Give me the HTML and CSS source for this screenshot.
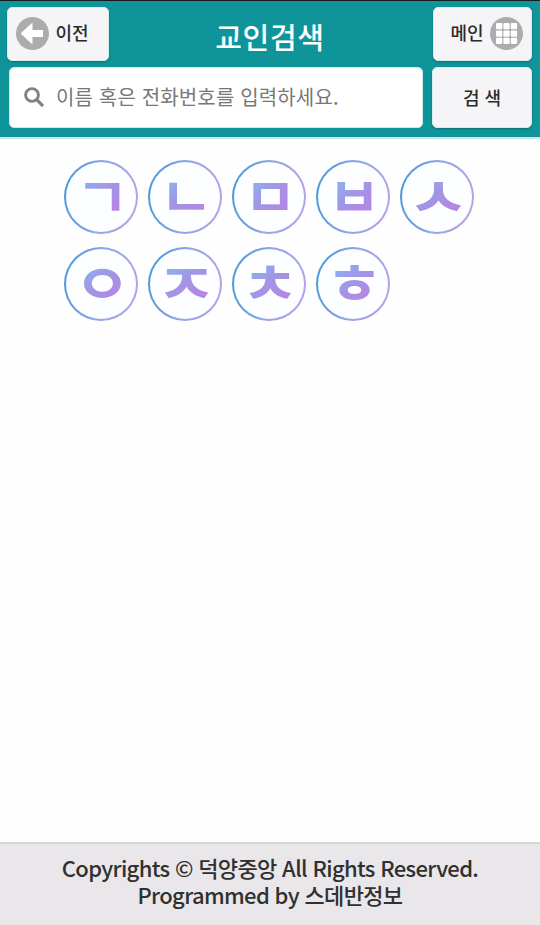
FILE: index.html
```html
<!DOCTYPE html>
<html lang="ko">
<head>
    <meta charset="UTF-8">
    <meta name="viewport" content="width=device-width, initial-scale=1.0">
    <title>교인검색</title>
    <link rel="stylesheet" href="styles.css">
</head>
<body>
    <header class="header">
        <div class="title-bar">
            <button type="button" class="btn btn-prev">
                <svg class="btn-icon" viewBox="0 0 33 33">
                    <circle cx="16.5" cy="16.5" r="16.5" fill="#acacac"/>
                    <path d="M4.5 16.5L16.5 5.5V13H27V20H16.5V27.5Z" fill="#fff"/>
                </svg>
                <span>이전</span>
            </button>
            <h1>교인검색</h1>
            <button type="button" class="btn btn-main">
                <span>메인</span>
                <svg class="btn-icon" viewBox="0 0 33 33">
                    <circle cx="16.5" cy="16.5" r="16.5" fill="#acacac"/>
                    <g fill="#fff">
                        <rect x="6" y="6" width="6.3" height="6.3" rx="1"/>
                        <rect x="13.4" y="6" width="6.3" height="6.3" rx="1"/>
                        <rect x="20.8" y="6" width="6.3" height="6.3" rx="1"/>
                        <rect x="6" y="13.4" width="6.3" height="6.3" rx="1"/>
                        <rect x="13.4" y="13.4" width="6.3" height="6.3" rx="1"/>
                        <rect x="20.8" y="13.4" width="6.3" height="6.3" rx="1"/>
                        <rect x="6" y="20.8" width="6.3" height="6.3" rx="1"/>
                        <rect x="13.4" y="20.8" width="6.3" height="6.3" rx="1"/>
                        <rect x="20.8" y="20.8" width="6.3" height="6.3" rx="1"/>
                    </g>
                </svg>
            </button>
        </div>
        <form class="search-bar">
            <div class="search-box">
                <svg class="search-icon" viewBox="0 0 20 20">
                    <circle cx="8" cy="8" r="6.4" fill="none" stroke="#808080" stroke-width="2.9"/>
                    <path d="M12.7 12.7L19 19" stroke="#808080" stroke-width="3.2"/>
                </svg>
                <input type="text" placeholder="이름 혹은 전화번호를 입력하세요.">
            </div>
            <button type="button" class="btn btn-search">검 색</button>
        </form>
    </header>

    <main class="initials">
        <a class="initial narrow"><span>ㄱ</span></a>
        <a class="initial narrow"><span>ㄴ</span></a>
        <a class="initial narrow"><span>ㅁ</span></a>
        <a class="initial narrow"><span>ㅂ</span></a>
        <a class="initial wide"><span>ㅅ</span></a>
        <a class="initial"><span>ㅇ</span></a>
        <a class="initial wide"><span>ㅈ</span></a>
        <a class="initial"><span>ㅊ</span></a>
        <a class="initial"><span>ㅎ</span></a>
    </main>

    <footer class="footer">
        <p>Copyrights © 덕양중앙 All Rights Reserved.<br>Programmed by 스데반정보</p>
    </footer>
</body>
</html>
```
FILE: styles.css
```css
* {
    margin: 0;
    padding: 0;
    box-sizing: border-box;
    font-family: 'Noto Sans CJK KR', sans-serif;
}

body {
    display: flex;
    flex-direction: column;
    height: 100vh;
    background: #fefefe;
    overflow: hidden;
}

.header {
    height: 139px;
    padding: 6px 8px 0 7px;
    background: #0f9499;
    border-top: 1px solid #161c1e;
    border-bottom: 2px solid #c9eaec;
}

.title-bar {
    display: flex;
    justify-content: space-between;
    height: 54px;
}

.btn {
    display: flex;
    align-items: center;
    background: #f5f4f6;
    border: 1px solid #d5eced;
    border-radius: 5px;
    box-shadow: 0 1px 2px rgba(0, 0, 0, 0.25);
    color: #2b2b2b;
    font-size: 18px;
    font-weight: 500;
    padding-bottom: 2px;
}

.btn-prev {
    width: 102px;
    padding-left: 8px;
    gap: 6px;
}

.btn-main {
    width: 99px;
    padding-left: 16px;
    gap: 6px;
}

.btn-prev span,
.btn-main span {
    width: 34px;
    padding-bottom: 2px;
    white-space: nowrap;
}

.btn-icon {
    width: 33px;
    height: 33px;
    flex: none;
}

h1 {
    padding-top: 7px;
    margin-left: -2px;
    color: #fff;
    font-size: 29px;
    font-weight: 500;
    line-height: 44px;
    letter-spacing: 0.7px;
}

.search-bar {
    display: flex;
    justify-content: space-between;
    height: 61px;
    margin-top: 6px;
    padding-left: 2px;
}

.search-box {
    display: flex;
    align-items: center;
    width: 414px;
    padding: 0 0 2px 14px;
    gap: 12px;
    background: #fff;
    border: 1px solid #c9eaec;
    border-radius: 5px;
}

.search-icon {
    width: 20px;
    height: 20px;
}

.search-box input {
    width: 350px;
    height: 50px;
    background: none;
    border: none;
    outline: none;
    font-size: 20px;
    letter-spacing: 0.15px;
}

.search-box input::placeholder {
    color: #777;
}

.btn-search {
    width: 100px;
    justify-content: center;
}

.initials {
    display: flex;
    flex: 1;
    flex-wrap: wrap;
    align-content: flex-start;
    gap: 13px 10px;
    padding: 21px 60px 0 64.4px;
}

.initial {
    display: flex;
    align-items: center;
    justify-content: center;
    width: 74px;
    height: 74px;
    border: 2px solid transparent;
    border-radius: 50%;
    background: linear-gradient(#fdfeff, #fdfeff) padding-box,
        linear-gradient(100deg, #4098d8, #8fa6e8 50%, #bda0e8) border-box;
}

.initial span {
    background: linear-gradient(135deg, #7fc0f4 10%, #a295e6 50%, #c07ee2 90%);
    -webkit-background-clip: text;
    background-clip: text;
    color: transparent;
    font-size: 55px;
    font-weight: 700;
    line-height: 60px;
    transform: translate(1px, -4px) scaleX(1.14);
}

.initial.narrow span {
    transform: translate(1px, -4px) scaleX(1.06);
}

.initial.wide span {
    transform: translate(1px, -4px) scaleX(1.22);
}

.footer {
    height: 83px;
    padding-top: 10px;
    background: #e9e7ea;
    border-top: 2px solid #d8d6d9;
    color: #303030;
    font-size: 22px;
    line-height: 27px;
    text-align: center;
}

.footer p {
    font-weight: 500;
    letter-spacing: -0.65px;
}
```
